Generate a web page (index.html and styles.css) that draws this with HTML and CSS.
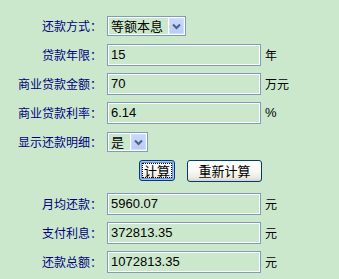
FILE: index.html
```html
<!DOCTYPE html>
<html lang="zh-CN">
<head>
<meta charset="utf-8">
<title>贷款计算器</title>
<link rel="stylesheet" href="styles.css">
</head>
<body>
<div class="calc">
  <div class="grid">
    <label class="lbl">还款方式：</label>
    <div class="field"><span class="sel sel-wide"><select class="sel-native"><option>等额本息</option><option>等额本金</option></select><span class="arr"><svg width="15" height="16" viewBox="0 0 15 16"><path d="M4 6.5 L7.5 10 L11 6.5" fill="none" stroke="#4d6185" stroke-width="2"/></svg></span></span></div>
    <span class="unit"></span>

    <label class="lbl">贷款年限：</label>
    <div class="field"><input class="txt" type="text" value="15"></div>
    <span class="unit">年</span>

    <label class="lbl">商业贷款金额：</label>
    <div class="field"><input class="txt" type="text" value="70"></div>
    <span class="unit">万元</span>

    <label class="lbl">商业贷款利率：</label>
    <div class="field"><input class="txt" type="text" value="6.14"></div>
    <span class="unit pct">%</span>

    <label class="lbl">显示还款明细：</label>
    <div class="field"><span class="sel sel-narrow"><select class="sel-native"><option>是</option><option>否</option></select><span class="arr"><svg width="15" height="16" viewBox="0 0 15 16"><path d="M4 6.5 L7.5 10 L11 6.5" fill="none" stroke="#4d6185" stroke-width="2"/></svg></span></span></div>
    <span class="unit"></span>

    <div class="btns">
      <button class="btn btn-calc" type="button">计算</button>
      <button class="btn btn-reset" type="button">重新计算</button>
    </div>
  </div>

  <div class="grid result">
    <label class="lbl">月均还款：</label>
    <div class="field"><input class="txt" type="text" value="5960.07"></div>
    <span class="unit">元</span>

    <label class="lbl">支付利息：</label>
    <div class="field"><input class="txt" type="text" value="372813.35"></div>
    <span class="unit">元</span>

    <label class="lbl">还款总额：</label>
    <div class="field"><input class="txt" type="text" value="1072813.35"></div>
    <span class="unit">元</span>
  </div>
</div>
</body>
</html>
```

FILE: styles.css
```css
html, body {
  margin: 0;
  padding: 0;
  background: #cce8cc;
}

body {
  font-family: "Noto Sans CJK SC", sans-serif;
  font-size: 12px;
  width: 339px;
  height: 279px;
  overflow: hidden;
}

.calc {
  padding: 11px 0 0 8px;
}

.grid {
  display: grid;
  grid-template-columns: 95px 154px auto;
  grid-auto-rows: 29px;
  column-gap: 4px;
  align-items: center;
}

.result {
  margin-top: 4px;
}

.lbl {
  text-align: right;
  padding-right: 1px;
  color: #000080;
  font-size: 12px;
  white-space: nowrap;
}

.field {
  display: flex;
  align-items: center;
}

.unit {
  color: #000;
  font-size: 12px;
}

.pct {
  font-family: "Liberation Sans", sans-serif;
  font-size: 13px;
}

.txt {
  box-sizing: border-box;
  width: 154px;
  height: 22px;
  margin: 0;
  padding: 0 3px;
  border: 1px solid #7f9db9;
  box-shadow: inset 0 0 0 1px #fff;
  background: transparent;
  font-family: "Liberation Sans", sans-serif;
  font-size: 13px;
  color: #000;
  outline: none;
}

.sel {
  box-sizing: border-box;
  display: inline-flex;
  height: 20px;
  padding: 1px;
  gap: 1px;
  border: 1px solid #7f9db9;
  background: #fff;
}

.sel-wide {
  width: 79px;
}

.sel-narrow {
  width: 41px;
}

.sel-native {
  appearance: none;
  -webkit-appearance: none;
  flex: 1;
  min-width: 0;
  height: 16px;
  margin: 0;
  padding: 0 0 0 2px;
  border: none;
  border-radius: 0;
  background: #cce8cc;
  font-family: "Noto Sans CJK SC", sans-serif;
  font-size: 13px;
  line-height: 16px;
  color: #000;
  outline: none;
}

.arr {
  box-sizing: border-box;
  width: 15px;
  height: 16px;
  flex: none;
  display: flex;
  background: linear-gradient(180deg, #c9d8fc 0%, #b9cbf8 100%);
  border: 1px solid #d3defb;
}

.arr svg {
  display: block;
  margin: -1px;
}

.btns {
  grid-column: 2 / 4;
  display: flex;
  align-items: center;
  gap: 12px;
  padding-left: 32px;
}

.btn {
  box-sizing: border-box;
  height: 22px;
  margin: 0;
  padding: 0;
  border: 1px solid #003c74;
  border-radius: 3px;
  background: linear-gradient(180deg, #ffffff 0%, #f7f7f3 55%, #ece9df 85%, #d8d3c7 100%);
  font-family: "Noto Sans CJK SC", sans-serif;
  font-size: 13px;
  line-height: 18px;
  color: #000;
}

.btn-calc {
  width: 36px;
  height: 21px;
  box-shadow: inset 0 0 0 1px #a9c1f4, inset 0 0 0 2px #6f92ea;
  outline: 1px dotted #000;
  outline-offset: -4px;
}

.btn-reset {
  width: 75px;
}
```
